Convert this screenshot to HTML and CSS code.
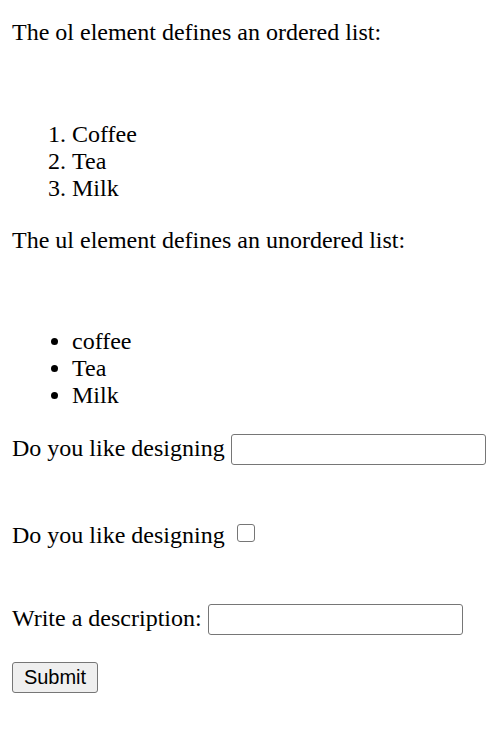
FILE: index.html
```html
<!DOCTYPE html>
<html lang="en">
<head>
<meta charset="utf-8">
<title>Lists and form</title>
<link rel="stylesheet" href="styles.css">
</head>
<body>
<p class="note note-first">The ol element defines an ordered list:</p>
<ol class="list">
  <li>Coffee</li>
  <li>Tea</li>
  <li>Milk</li>
</ol>
<p class="note">The ul element defines an unordered list:</p>
<ul class="list list-bullets">
  <li>coffee</li>
  <li>Tea</li>
  <li>Milk</li>
</ul>
<form class="form">
  <div class="row">Do you like designing <input type="text" class="field"></div>
  <div class="row row-check">Do you like designing <input type="checkbox" class="check"></div>
  <div class="row row-desc">Write a description: <input type="text" class="field"></div>
  <div class="row row-button"><button type="button" class="btn">Submit</button></div>
</form>
</body>
</html>
```

FILE: styles.css
```css
html, body {
  background: #ffffff;
}
body {
  margin: 0;
  padding: 0 12px;
  font-family: "Liberation Serif", "Times New Roman", serif;
  font-size: 24px;
  line-height: normal;
  color: #000000;
}
.note {
  margin: 24px 0 74.6px;
}
.note-first {
  margin-top: 19px;
}
.list {
  margin: 0 0 25px;
  padding-left: 60px;
}
.list-bullets {
  list-style: disc;
}
.form {
  margin: 0;
}
.row {
  margin: 0;
}
.row-check {
  margin-top: 57px;
}
.row-desc {
  margin-top: 55px;
}
.row-button {
  margin-top: 27px;
}
.field {
  box-sizing: border-box;
  width: 255px;
  height: 31px;
  margin: 0;
  padding: 1px 3px;
  border: 1px solid #767676;
  border-radius: 3px;
  background: #ffffff;
  font-family: "Liberation Sans", Arial, sans-serif;
  font-size: 20px;
  vertical-align: baseline;
}
.check {
  appearance: none;
  -webkit-appearance: none;
  box-sizing: border-box;
  width: 18px;
  height: 18px;
  margin: 0 0 0 6px;
  border: 1px solid #767676;
  border-radius: 3px;
  background: #ffffff;
  vertical-align: 1px;
}
.btn {
  box-sizing: border-box;
  width: 86px;
  height: 31px;
  margin: 0;
  padding: 0 9px;
  border: 1px solid #767676;
  border-radius: 3px;
  background: #efefef;
  color: #000000;
  font-family: "Liberation Sans", Arial, sans-serif;
  font-size: 20px;
}
```
